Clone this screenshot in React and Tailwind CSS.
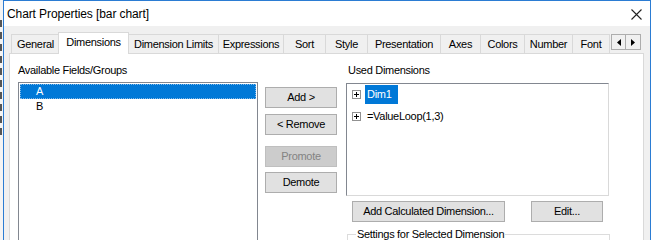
import React from "react";

const font = { fontFamily: '"Liberation Sans", Arial, sans-serif' };

function Tab({ label, w, selected }) {
  if (selected) {
    return (
      <div
        className="h-[22px] -mb-px relative z-10 bg-white border border-b-0 border-[#d9d9d9] flex items-center justify-center -mx-px whitespace-nowrap"
        style={{ width: w + 2 }}
      >
        <span className="pb-[2px]">{label}</span>
      </div>
    );
  }
  return (
    <div
      className="h-[19px] bg-[#f0f0f0] border border-b-0 border-r-0 border-[#d9d9d9] flex items-center justify-center whitespace-nowrap"
      style={{ width: w }}
    >
      {label}
    </div>
  );
}

function Btn({ children, w = 72, disabled, className = "" }) {
  return (
    <div
      className={
        "h-[21px] flex items-center justify-center border whitespace-nowrap " +
        (disabled
          ? "bg-[#cccccc] border-[#bfbfbf] text-[#838383] "
          : "bg-[#e1e1e1] border-[#adadad] text-black ") +
        className
      }
      style={{ width: w }}
    >
      {children}
    </div>
  );
}

function PlusBox() {
  return (
    <div className="w-[9px] h-[9px] border border-[#919191] bg-white relative shrink-0">
      <div className="absolute left-[1px] top-[3px] w-[5px] h-px bg-black" />
      <div className="absolute left-[3px] top-[1px] w-px h-[5px] bg-black" />
    </div>
  );
}

export default function App() {
  return (
    <div
      className="w-[651px] h-[240px] overflow-hidden flex text-[11px] leading-[15px] tracking-[-0.3px] text-black bg-white"
      style={font}
    >
      {/* background strip */}
      <div className="w-[3px] h-full bg-[#f4f4f4] flex flex-col gap-[5px] pt-[20px]">
        <div className="h-[7px] w-[2px] bg-[#555]" />
        <div className="h-[7px] w-[2px] bg-[#555]" />
        <div className="h-[7px] w-[2px] bg-[#555]" />
        <div className="h-[7px] w-[2px] bg-[#555]" />
        <div className="h-[7px] w-[2px] bg-[#555]" />
        <div className="h-[7px] w-[2px] bg-[#555]" />
        <div className="h-[7px] w-[2px] bg-[#555]" />
        <div className="h-[7px] w-[2px] bg-[#555]" />
        <div className="h-[7px] w-[2px] bg-[#555]" />
        <div className="h-[7px] w-[2px] bg-[#555]" />
      </div>
      {/* window */}
      <div className="flex-1 h-full border-l border-r border-t border-[#2b7cd3] flex flex-col">
        {/* title bar */}
        <div className="h-[25px] shrink-0 bg-white flex items-center justify-between pl-[3px] pr-[8px]">
          <span className="text-[12px] tracking-[-0.1px] pt-[1px]">Chart Properties [bar chart]</span>
          <svg width="11" height="11" viewBox="0 0 11 11" className="mt-[2px]">
            <path d="M0.5 0.5 L10.5 10.5 M10.5 0.5 L0.5 10.5" stroke="#222" strokeWidth="1.1" />
          </svg>
        </div>
        {/* body */}
        <div className="flex-1 bg-[#f0f0f0] pl-[6px] pr-[6px] flex flex-col">
          {/* tab row */}
          <div className="h-[27px] shrink-0 flex items-end pl-[1px]">
            <Tab label="General" w={48} />
            <Tab label="Dimensions" w={69} selected />
            <Tab label="Dimension Limits" w={90} />
            <Tab label="Expressions" w={65} />
            <Tab label="Sort" w={42} />
            <Tab label="Style" w={42} />
            <Tab label="Presentation" w={73} />
            <Tab label="Axes" w={40} />
            <Tab label="Colors" w={44} />
            <Tab label="Number" w={48} />
            <div className="h-[19px] w-[38px] border-l border-t border-r border-[#d9d9d9] flex items-center justify-center">Font</div>
            <div className="flex self-start mt-[8px] ml-[1px]">
              <div className="w-[15px] h-[16px] border border-[#adadad] bg-[#f0f0f0] flex items-center justify-center">
                <svg width="4" height="7" viewBox="0 0 4 7"><path d="M4 0 L0 3.5 L4 7 Z" fill="#000" /></svg>
              </div>
              <div className="w-[15px] h-[16px] border border-l-0 border-[#adadad] bg-[#f0f0f0] flex items-center justify-center">
                <svg width="4" height="7" viewBox="0 0 4 7"><path d="M0 0 L4 3.5 L0 7 Z" fill="#000" /></svg>
              </div>
            </div>
          </div>
          {/* panel */}
          <div className="flex-1 bg-white border border-[#d9d9d9] border-b-0 -ml-px pl-[8px] pt-[6px] flex">
            {/* left column */}
            <div className="w-[240px] flex flex-col">
              <div className="h-[20px] leading-[20px]">Available Fields/Groups</div>
              <div className="mt-[2px] flex-1 border border-b-0 border-[#828790] pt-[1px] px-[1px]">
                <div className="h-[15px] bg-[#0078d7] text-white pl-[16px] flex items-center outline outline-1 outline-dotted outline-[#7fb7e8] -outline-offset-1">A</div>
                <div className="h-[15px] pl-[16px] flex items-center">B</div>
              </div>
            </div>
            {/* middle */}
            <div className="ml-[7px] pt-[27px] flex flex-col">
              <Btn>Add &gt;</Btn>
              <Btn className="mt-[6px]">&lt; Remove</Btn>
              <Btn className="mt-[11px]" disabled>Promote</Btn>
              <Btn className="mt-[5px]">Demote</Btn>
            </div>
            {/* right */}
            <div className="ml-[9px] w-[263px] flex flex-col">
              <div className="h-[20px] leading-[20px] pl-[2px]">Used Dimensions</div>
              <div className="mt-[3px] h-[113px] border border-[#828790] border-r-[#d9d9d9] border-b-[#d9d9d9] pt-[1px] pl-[5px]">
                <div className="h-[19px] flex items-center">
                  <PlusBox />
                  <div className="ml-[4px] h-[19px] w-[33px] bg-[#0078d7] text-white flex items-center pl-[2px]">Dim1</div>
                </div>
                <div className="h-[3px]" />
                <div className="h-[19px] flex items-center">
                  <PlusBox />
                  <div className="ml-[4px] pl-[2px]">=ValueLoop(1,3)</div>
                </div>
              </div>
              <div className="mt-[5px] flex pl-[6px]">
                <Btn w={153}>Add Calculated Dimension...</Btn>
                <Btn w={72} className="ml-[26px]">Edit...</Btn>
              </div>
              <div className="mt-[12px] ml-[1px] w-[263px] h-[20px] border-l border-t border-r border-[#dcdcdc] relative">
                <span className="absolute left-[8px] -top-[8px] bg-white px-[1px] leading-[15px] whitespace-nowrap">Settings for Selected Dimension</span>
              </div>
            </div>
          </div>
        </div>
      </div>
    </div>
  );
}
